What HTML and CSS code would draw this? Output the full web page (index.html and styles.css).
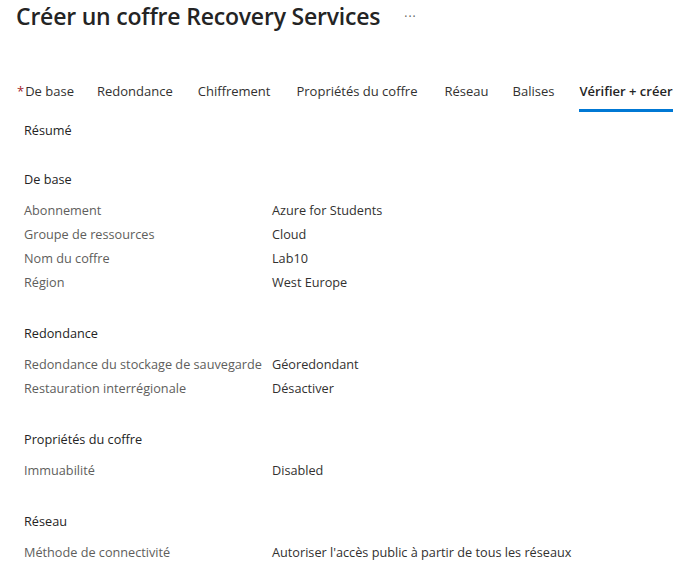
FILE: index.html
```html
<!DOCTYPE html>
<html lang="fr">
<head>
<meta charset="utf-8">
<link rel="stylesheet" href="styles.css">
</head>
<body>
<header class="title-bar">
  <h1 class="title">Créer un coffre Recovery Services</h1>
  <span class="more">···</span>
</header>
<nav class="tabs">
  <span class="tab tab-base"><span class="req">*</span>De base</span>
  <span class="tab tab-red">Redondance</span>
  <span class="tab tab-chif">Chiffrement</span>
  <span class="tab tab-prop">Propriétés du coffre</span>
  <span class="tab tab-res">Réseau</span>
  <span class="tab tab-bal">Balises</span>
  <span class="tab tab-active">Vérifier + créer</span>
</nav>
<main class="content">
  <div class="summary">Résumé</div>
  <section class="section">
    <div class="sec-title">De base</div>
    <div class="row"><span class="label">Abonnement</span><span class="value">Azure for Students</span></div>
    <div class="row"><span class="label">Groupe de ressources</span><span class="value">Cloud</span></div>
    <div class="row"><span class="label">Nom du coffre</span><span class="value">Lab10</span></div>
    <div class="row"><span class="label">Région</span><span class="value">West Europe</span></div>
  </section>
  <section class="section">
    <div class="sec-title">Redondance</div>
    <div class="row"><span class="label">Redondance du stockage de sauvegarde</span><span class="value">Géoredondant</span></div>
    <div class="row"><span class="label">Restauration interrégionale</span><span class="value">Désactiver</span></div>
  </section>
  <section class="section">
    <div class="sec-title">Propriétés du coffre</div>
    <div class="row"><span class="label">Immuabilité</span><span class="value">Disabled</span></div>
  </section>
  <section class="section">
    <div class="sec-title">Réseau</div>
    <div class="row"><span class="label">Méthode de connectivité</span><span class="value">Autoriser l'accès public à partir de tous les réseaux</span></div>
  </section>
</main>
</body>
</html>
```
FILE: styles.css
```css
* { box-sizing: border-box; }
html, body { margin: 0; padding: 0; background: #ffffff; }
body {
  font-family: "Open Sans", "Noto Sans", "Liberation Sans", sans-serif;
  color: #323130;
  overflow: hidden;
}
.title-bar {
  display: flex;
  align-items: center;
  height: 32px;
  padding-left: 16px;
}
.title {
  margin: 0;
  font-size: 23px;
  font-weight: 600;
  letter-spacing: -0.2px;
  color: #242424;
  line-height: 32px;
  white-space: nowrap;
}
.more {
  margin-left: 24px;
  font-size: 12px;
  color: #605e5c;
  letter-spacing: 1px;
}
.tabs {
  display: flex;
  margin-top: 46px;
  padding-left: 17px;
  height: 34px;
  align-items: stretch;
}
.tab {
  font-size: 13px;
  color: #323130;
  line-height: 26px;
  white-space: nowrap;
  border-bottom: 3px solid transparent;
  margin-right: 25px;
}
.tab-base { margin-right: 23px; }
.tab-chif { margin-right: 26px; }
.tab-prop { margin-right: 27px; }
.tab-res { margin-right: 24px; }
.req { color: #a4262c; margin-right: 1px; }
.tab-active {
  border-bottom-color: #0078d4;
  font-weight: 600;
  color: #242424;
}
.content {
  padding-left: 24px;
  padding-top: 6px;
  font-size: 12.7px;
}
.summary {
  line-height: 24px;
  margin-bottom: 25px;
  color: #242424;
}
.section { margin-bottom: 27px; }
.sec-title {
  line-height: 24px;
  margin-bottom: 7px;
  color: #242424;
}
.row {
  display: flex;
  line-height: 24px;
}
.label {
  width: 248px;
  flex: none;
  color: #605e5c;
  white-space: nowrap;
}
.value { color: #323130; white-space: nowrap; }
```
